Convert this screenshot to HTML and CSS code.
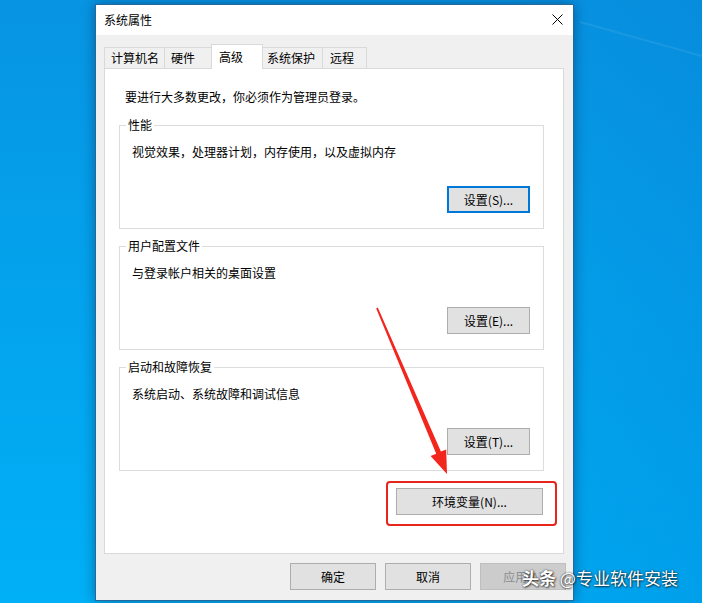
FILE: index.html
```html
<!DOCTYPE html>
<html lang="zh-CN">
<head>
<meta charset="utf-8">
<title>系统属性</title>
<link rel="stylesheet" href="styles.css">
</head>
<body>
<div class="desktop">
  <svg class="bg-decor" width="702" height="603" viewBox="0 0 702 603">
    <line x1="580" y1="22" x2="702" y2="56" stroke="rgba(255,255,255,0.08)" stroke-width="2"/>
  </svg>
  <div class="dialog">
    <div class="titlebar">
      <span class="title">系统属性</span>
      <svg class="close" width="11" height="11" viewBox="0 0 11 11">
        <path d="M0.5 0.5 L10.5 10.5 M10.5 0.5 L0.5 10.5" stroke="#000" stroke-width="1"/>
      </svg>
    </div>
    <div class="body">
      <div class="tabs">
        <div class="tab w1">计算机名</div>
        <div class="tab w2">硬件</div>
        <div class="tab active w3">高级</div>
        <div class="tab w4">系统保护</div>
        <div class="tab w5">远程</div>
      </div>
      <div class="panel">
        <div class="intro">要进行大多数更改，你必须作为管理员登录。</div>
        <fieldset class="group">
          <legend>性能</legend>
          <div class="group-body">
            <div class="group-text">视觉效果，处理器计划，内存使用，以及虚拟内存</div>
            <button class="btn small focus">设置(S)...</button>
          </div>
        </fieldset>
        <fieldset class="group">
          <legend>用户配置文件</legend>
          <div class="group-body">
            <div class="group-text">与登录帐户相关的桌面设置</div>
            <button class="btn small">设置(E)...</button>
          </div>
        </fieldset>
        <fieldset class="group">
          <legend>启动和故障恢复</legend>
          <div class="group-body">
            <div class="group-text">系统启动、系统故障和调试信息</div>
            <button class="btn small">设置(T)...</button>
          </div>
        </fieldset>
        <button class="btn env">环境变量(N)...</button>
      </div>
      <div class="actions">
        <button class="btn wide">确定</button>
        <button class="btn wide">取消</button>
        <button class="btn wide disabled">应用(A)</button>
      </div>
    </div>
  </div>
  <div class="highlight"></div>
  <svg class="arrow" width="702" height="603" viewBox="0 0 702 603">
    <polygon fill="#f2261d" points="376.2,308.4 377.8,307.6 440.9,451.6 446.2,449.6 447,474 430.6,456 436.2,453.8"/>
  </svg>
  <div class="watermark"><b>头条</b> @专业软件安装</div>
</div>
</body>
</html>
```

FILE: styles.css
```css
* { box-sizing: border-box; }
html, body { margin: 0; padding: 0; }
body {
  font-family: "Noto Sans CJK SC", "Microsoft YaHei", sans-serif;
  font-size: 12px;
  color: #000;
}
.desktop {
  position: relative;
  width: 702px;
  height: 603px;
  overflow: hidden;
  padding: 4px 0 0 95px;
  background:
    linear-gradient(105deg, rgba(0,0,0,0) 55%, rgba(0,40,150,0.12) 100%),
    linear-gradient(180deg, #0794e2 0%, #04a2ec 45%, #00b0f6 100%);
}
.bg-decor { position: absolute; left: 0; top: 0; pointer-events: none; }
.dialog {
  position: relative;
  width: 479px;
  height: 597px;
  border: 1px solid #24689c;
  background: #f0f0f0;
  box-shadow: 0 0 12px rgba(0, 30, 70, 0.45);
  display: flex;
  flex-direction: column;
}
.titlebar {
  height: 30px;
  background: #fff;
  display: flex;
  align-items: center;
  justify-content: space-between;
  padding: 0 10px 0 8px;
  flex: none;
}
.title { line-height: 16px; }
.close { display: block; margin-top: -1px; }
.body {
  padding: 9px 9px 0 8px;
  display: flex;
  flex-direction: column;
}
.tabs {
  display: flex;
  align-items: flex-end;
  height: 24px;
  position: relative;
  z-index: 2;
}
.tab {
  height: 21px;
  border: 1px solid #d9d9d9;
  border-bottom: none;
  background: #f0f0f0;
  line-height: 19px;
  padding-left: 6px;
  white-space: nowrap;
  margin-left: -1px;
}
.tab:first-child { margin-left: 0; }
.tab.active {
  height: 25px;
  background: #fff;
  line-height: 23px;
  margin-bottom: -1px;
  padding-left: 7px;
  position: relative;
}
.w1 { width: 61px; }
.w2 { width: 48px; }
.w3 { width: 52px; }
.w4 { width: 61px; padding-left: 4px; }
.w5 { width: 45px; padding-left: 7px; }
.panel {
  height: 486px;
  border: 1px solid #d9d9d9;
  background: #fff;
  padding: 20px 19px 0 14px;
  display: flex;
  flex-direction: column;
}
.intro {
  line-height: 16px;
  padding-left: 6px;
  margin-bottom: 12px;
}
.group {
  margin: 0 0 9px 0;
  padding: 0 13px 0 6px;
  border: 1px solid #dcdcdc;
  min-width: 0;
}
.group legend {
  padding: 0 2px;
  line-height: 16px;
  font-size: 12px;
}
.group-body {
  height: 95px;
  display: flex;
  flex-direction: column;
}
.group-text {
  margin-top: 11px;
  padding-left: 6px;
  line-height: 16px;
}
.btn {
  font-family: "Noto Sans CJK SC", "Microsoft YaHei", sans-serif;
  font-size: 12px;
  color: #000;
  background: #e1e1e1;
  border: 1px solid #adadad;
  height: 27px;
  padding: 0;
  line-height: 16px;
  border-radius: 0;
}
.btn.small { width: 83px; }
.btn.focus { border: 2px solid #0078d7; }
.group-body .btn {
  margin-top: auto;
  margin-bottom: 15px;
  align-self: flex-end;
}
.btn.env {
  width: 147px;
  align-self: flex-end;
  margin-top: 8px;
  margin-right: 1px;
}
.actions {
  display: flex;
  justify-content: flex-end;
  gap: 9px;
  margin-right: -2px;
  margin-top: 9px;
}
.btn.wide { width: 86px; }
.btn.disabled {
  background: #cccccc;
  border-color: #bfbfbf;
  color: #8d8d8d;
}
.highlight {
  position: absolute;
  left: 386px;
  top: 481px;
  width: 171px;
  height: 45px;
  border: 2.5px solid #e8251d;
  border-radius: 4px;
}
.arrow { position: absolute; left: 0; top: 0; pointer-events: none; }
.watermark {
  position: absolute;
  left: 522px;
  top: 567px;
  font-size: 17px;
  line-height: 22px;
  color: #fff;
  white-space: nowrap;
  text-shadow: 0 0 2px rgba(0,0,0,0.75), 1px 1px 2px rgba(0,0,0,0.6);
}
.watermark b { font-weight: 700; }
```
